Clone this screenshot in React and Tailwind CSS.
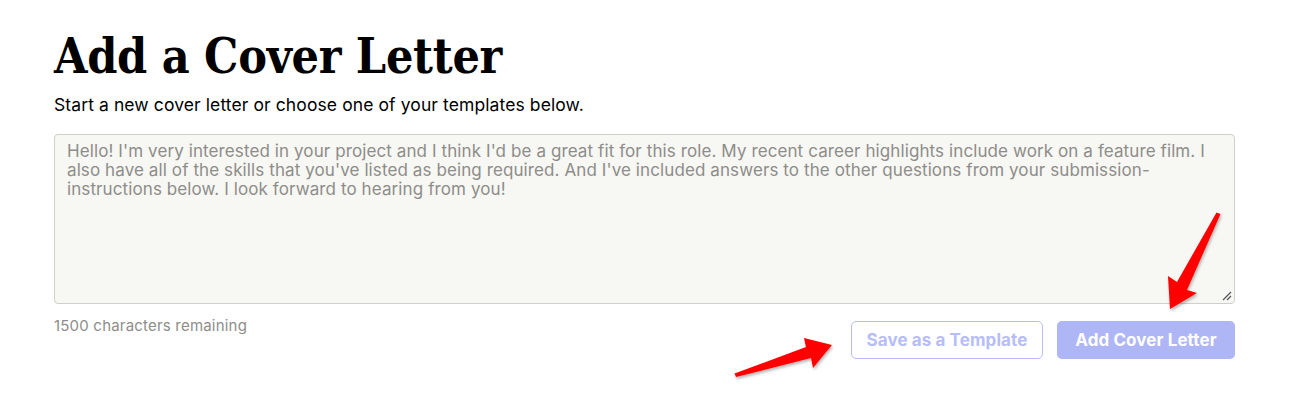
import React from 'react'

const body = { fontFamily: 'Inter, "Liberation Sans", sans-serif' }

const Arrows = () => (
	<svg className="absolute inset-0 pointer-events-none" width="1290" height="400" viewBox="0 0 1290 400">
		<defs>
			<filter id="shade" x="-20%" y="-20%" width="140%" height="140%">
				<feDropShadow dx="1" dy="2" stdDeviation="1.5" floodColor="#000" floodOpacity="0.3" />
			</filter>
		</defs>
		<polygon
			points="1220.5,214 1187,290 1197,293 1170,309 1168,276 1177,282 1216.5,212.5"
			fill="#ff0000"
			filter="url(#shade)"
		/>
		<polygon
			points="736,377 811,358 813,368 832,345 804,338 806,347 734.5,373.5"
			fill="#ff0000"
			filter="url(#shade)"
		/>
	</svg>
)

export default function App() {
	const letter = "Hello! I'm very interested in your project and I think I'd be a great fit for this role. My recent career highlights include work on a feature film. I also have all of the skills that you've listed as being required. And I've included answers to the other questions from your submission-instructions below. I look forward to hearing from you!"

	return (
		<div className="relative w-[1290px] h-[400px] bg-white overflow-hidden" style={body}>
			<div className="pl-[54px] pr-[55px] pt-[27px]">
				<h1
					className="text-[48px] leading-[58px] font-bold text-black font-stretch-condensed tracking-[-0.3px]"
					style={{ fontFamily: '"DejaVu Serif Condensed", "DejaVu Serif", "Liberation Serif", serif' }}
				>
					Add a Cover Letter
				</h1>
				<p className="mt-[9px] text-[17.5px] leading-[22px] tracking-[0.1px] text-black">
					Start a new cover letter or choose one of your templates below.
				</p>

				<div className="mt-[18px] h-[170px] rounded-[4px] border border-[#cfcfcb] bg-[#f7f7f3] pl-[12px] pr-[10px] pt-[7px] relative">
					<p className="text-[17px] leading-[19px] tracking-[0.1px] text-[#8d8d8a]">{letter}</p>
					<svg className="absolute right-[2px] bottom-[2px]" width="12" height="12" viewBox="0 0 12 12">
						<path d="M3 11 L11 3 M7 11 L11 7" stroke="#555" strokeWidth="1.2" />
					</svg>
				</div>

				<div className="flex items-start justify-between mt-[13px]">
					<span className="text-[15px] leading-[18px] tracking-[0.2px] text-[#8d8d8a]">1500 characters remaining</span>
					<div className="flex gap-[14px] mt-[4px]">
						<button className="h-[38px] w-[192px] rounded-[5px] border border-[#b7bdf6] bg-white pt-[2px] text-[17px] tracking-[0.1px] font-bold text-[#b7bdf6]">
							Save as a Template
						</button>
						<button className="h-[38px] w-[178px] rounded-[5px] bg-[#aeb6f6] pt-[2px] text-[17px] tracking-[0.1px] font-bold text-white">
							Add Cover Letter
						</button>
					</div>
				</div>
			</div>
			<Arrows />
		</div>
	)
}
